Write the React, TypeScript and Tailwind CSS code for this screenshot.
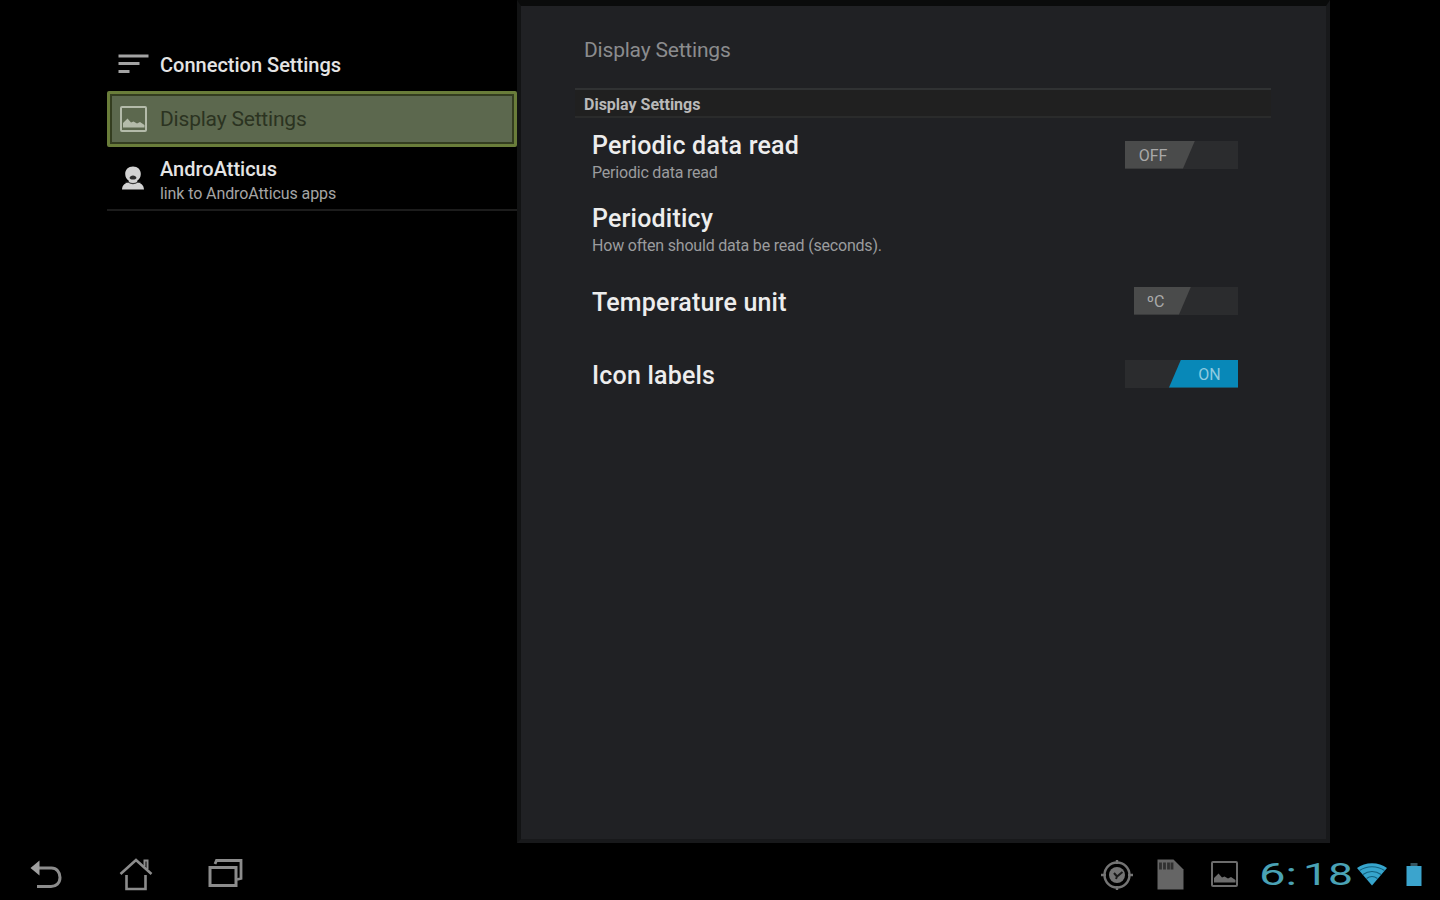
import type { ReactNode } from 'react';
import clsx from 'clsx';

type HeaderItem = {
  title: string;
  summary?: string;
  icon: ReactNode;
  selected?: boolean;
};

function SortIcon() {
  return (
    <svg width="32" height="24" viewBox="0 0 32 24" fill="none" stroke="#a3a3a3" strokeWidth="3">
      <path d="M1.500 4h30" />
      <path d="M1.500 11.500h21" />
      <path d="M1.500 19.500h11" />
    </svg>
  );
}

function PictureIcon({ color }: { color: string }) {
  return (
    <svg width="28" height="28" viewBox="0 0 28 28">
      <rect x="2" y="2" width="25" height="24" rx="1" fill="none" stroke={color} strokeWidth="2" />
      <path d="M4 22.500v-4.500l4.500-4.500 3.500 4 2.500-1 3.500 2 3-1.500 4.500 3v2.500z" fill={color} />
    </svg>
  );
}

function PersonIcon() {
  return (
    <svg width="24" height="26" viewBox="0 0 24 26">
      <path
        d="M12 1.500c-4.700 0-7.800 3.100-7.800 7.400 0 3 1.500 5.400 3.600 6.900v1.500C4 18 1.200 20 1 24.500h22c-.2-4.500-3-6.500-6.800-7.200v-1.500c2.100-1.500 3.600-3.900 3.600-6.900 0-4.300-3.100-7.400-7.800-7.400z"
        fill="#d2d2d2"
      />
      <path d="M8.500 13c.3-1.600 1.700-2.500 3.500-2.500s3.200.9 3.500 2.500c-.8 1-1.500 1.500-3.500 1.500s-2.700-.5-3.500-1.500z" fill="#2c2c2c" />
      <path d="M4.500 17.300h3.300c1 .9 2.400 1.300 4.200 1.300s3.200-.4 4.200-1.300h3.300" fill="none" stroke="#3a3a3a" strokeWidth="1.100" />
    </svg>
  );
}

const headers: HeaderItem[] = [
  { title: 'Connection Settings', icon: <SortIcon /> },
  { title: 'Display Settings', icon: <PictureIcon color="#b4bbaa" />, selected: true },
  { title: 'AndroAtticus', summary: 'link to AndroAtticus apps', icon: <PersonIcon /> },
];

function HeaderRow({ item }: { item: HeaderItem }) {
  return (
    <li
      className={clsx(
        'flex items-center',
        item.selected
          ? 'h-14 rounded-[2px] border-[3px] border-[#6a7d3a] bg-[#5c684e] shadow-[inset_0_0_0_2px_#343d20]'
          : 'px-[3px]',
        !item.selected && (item.summary ? 'h-16 border-b-2 border-[#1c1c1c]' : 'h-[54px]'),
      )}
    >
      <span className="flex w-[46px] shrink-0 justify-center">{item.icon}</span>
      <div className={clsx('ml-1', item.summary && 'pt-1.5', !item.summary && !item.selected && 'pt-0.5')}>
        <p
          className={clsx(
            item.selected
              ? 'text-[21px] leading-[26px] tracking-[-0.2px] text-[#2b3321]'
              : 'text-[20px] font-medium leading-[25px] text-[#e4e4e4]',
          )}
        >
          {item.title}
        </p>
        {item.summary && (
          <p className="text-[16px] leading-[23px] tracking-[-0.1px] text-[#a5a5a5]">{item.summary}</p>
        )}
      </div>
    </li>
  );
}

function Toggle({ label, on = false, narrow = false }: { label: string; on?: boolean; narrow?: boolean }) {
  return (
    <button
      type="button"
      role="switch"
      aria-checked={on}
      className={clsx('flex h-7 bg-[#2b2c2e]', narrow ? 'w-[104px]' : 'w-[113px]', on && 'justify-end')}
    >
      <span
        className={clsx(
          'flex h-full items-center justify-center pt-[3px] text-[16px]',
          on
            ? 'w-[69px] bg-[#0888b8] pl-3 text-[#8fcbe0] [clip-path:polygon(12px_0,100%_0,100%_100%,0_100%)]'
            : 'bg-[#4a4b4b] pr-3.5 text-[#a9a9a9] [clip-path:polygon(0_0,100%_0,calc(100%-12px)_100%,0_100%)]',
          !on && (narrow ? 'w-[57px]' : 'w-[70px]'),
        )}
      >
        {label}
      </span>
    </button>
  );
}

function Preference({ title, summary, children }: { title: string; summary?: string; children?: ReactNode }) {
  return (
    <li className="flex h-[73px] items-center justify-between pl-[17px] pr-[33px]">
      <div className={summary ? 'pt-[7px]' : 'pt-1'}>
        <p className="text-[25px] font-medium leading-[30px] tracking-[0.2px] text-[#ededed]">{title}</p>
        {summary && <p className="text-[16px] leading-6 tracking-[-0.2px] text-[#9b9c9e]">{summary}</p>}
      </div>
      {children}
    </li>
  );
}

function BackIcon() {
  return (
    <svg width="34" height="32" viewBox="0 0 34 32" fill="none" stroke="#8c8c8c" strokeWidth="3">
      <path d="M9 9h13.500c5 0 8.500 4 8.500 9.500s-4 9-9 9H8" />
      <path d="M1.500 9l9-7.500v15z" fill="#a0a0a0" stroke="none" />
    </svg>
  );
}

function HomeIcon() {
  return (
    <svg width="34" height="34" viewBox="0 0 34 34" fill="none" stroke="#8c8c8c" strokeWidth="2.600">
      <path d="M1.500 16L17 2l15.500 14" />
      <path d="M25.500 8.500V2.500h3v8.500" strokeWidth="2" />
      <path d="M7.500 17v14h19V17" />
    </svg>
  );
}

function RecentIcon() {
  return (
    <svg width="36" height="32" viewBox="0 0 36 32" fill="none" stroke="#8c8c8c" strokeWidth="3">
      <rect x="2" y="9.500" width="26" height="18" />
      <path d="M7 6l1.500-3.500H33V20.500l-4 1" strokeWidth="2.800" />
    </svg>
  );
}

function TargetIcon() {
  return (
    <svg width="34" height="32" viewBox="0 0 34 32" fill="none" stroke="#747474" strokeWidth="2.400">
      <circle cx="17" cy="16" r="12.500" />
      <circle cx="17" cy="16" r="8" fill="#747474" stroke="none" />
      <path d="M17 1v4M17 27v4M1 16h5M28 16h5" />
      <path d="M14 14l3 3.500 5.500-4.500M17 17.500l-1 2.500" stroke="#1a1a1a" strokeWidth="2" />
    </svg>
  );
}

function SdCardIcon() {
  return (
    <svg width="28" height="32" viewBox="0 0 28 32">
      <path d="M1.500.5h16l10 10v20h-26z" fill="#656565" />
      <path d="M4.500 3.500v7M8.500 3.500v7M12.500 3.500v7M16 3.500v7" stroke="#303030" strokeWidth="2.800" />
    </svg>
  );
}

function WifiIcon() {
  return (
    <svg width="30" height="24" viewBox="0 0 30 24">
      <path d="M0 6C8-.5 22-.5 30 6L15 23.500z" fill="#36a5cd" />
      <path
        d="M2.500 8.500c7.500-5 17.500-5 25 0M6 12.500c5.500-4 12.500-4 18 0M9.500 16.500c3.500-2.600 7.500-2.600 11 0"
        fill="none"
        stroke="#12617f"
        strokeWidth="1.100"
      />
    </svg>
  );
}

function BatteryIcon() {
  return (
    <svg width="18" height="26" viewBox="0 0 18 26">
      <path d="M5.500 1h7v3h-7z" fill="#35545f" />
      <path d="M1.500 4h15v20h-15z" fill="#3ba4cd" />
    </svg>
  );
}

function Clock() {
  return (
    <svg
      width="94"
      height="42"
      viewBox="0 0 94 42"
      className="my-[-4px] overflow-visible font-['Roboto',sans-serif]"
      fill="#4aa2b5"
    >
      <text x="-1" y="31" fontSize="31" textLength="38" lengthAdjust="spacingAndGlyphs">
        6:
      </text>
      <text x="43" y="31" fontSize="31" textLength="50" lengthAdjust="spacingAndGlyphs">
        18
      </text>
    </svg>
  );
}

function SystemBar() {
  return (
    <footer className="flex h-[57px] items-start justify-between pl-[29px] pr-[17px] pt-[15px]">
      <nav className="flex h-[34px] items-center">
        <BackIcon />
        <span className="ml-14">
          <HomeIcon />
        </span>
        <span className="ml-[55px] pb-0.5">
          <RecentIcon />
        </span>
      </nav>
      <div className="flex h-[34px] items-center">
        <TargetIcon />
        <span className="ml-[22px]">
          <SdCardIcon />
        </span>
        <span className="ml-[26px] pb-0.5">
          <PictureIcon color="#6c6c6c" />
        </span>
        <span className="ml-[22px]">
          <Clock />
        </span>
        <span className="ml-[3px] pb-0.5">
          <WifiIcon />
        </span>
        <span className="ml-[18px]">
          <BatteryIcon />
        </span>
      </div>
    </footer>
  );
}

export default function App() {
  return (
    <div className="flex h-[900px] w-[1440px] flex-col overflow-hidden bg-black font-['Roboto',sans-serif] [&_svg]:block">
      <div className="flex h-[843px] pl-[107px]">
        <ul className="w-[410px] pt-[37px]">
          {headers.map((item) => (
            <HeaderRow key={item.title} item={item} />
          ))}
        </ul>
        <main className="w-[813px] border-x-4 border-b-4 border-t-[6px] border-b-[#18191b] border-l-[#121314] border-r-[#18191b] border-t-[#0a0b0b] bg-[#202124] pl-[54px] pr-[55px]">
          <h1 className="flex h-[82px] items-center pl-[9px] pt-2 text-[21px] tracking-[-0.2px] text-[#8b8c8e]">
            Display Settings
          </h1>
          <h2 className="flex h-[30px] items-center border-b-2 border-t-2 border-b-[#2a2b2b] border-t-[#303233] bg-[#202020] pl-[9px] pt-1 text-[16px] font-bold text-[#b9b9b9]">
            Display Settings
          </h2>
          <ul>
            <Preference title="Periodic data read" summary="Periodic data read">
              <Toggle label="OFF" />
            </Preference>
            <Preference title="Perioditicy" summary="How often should data be read (seconds)." />
            <Preference title="Temperature unit">
              <Toggle label="ºC" narrow />
            </Preference>
            <Preference title="Icon labels">
              <Toggle label="ON" on />
            </Preference>
          </ul>
        </main>
      </div>
      <SystemBar />
    </div>
  );
}
